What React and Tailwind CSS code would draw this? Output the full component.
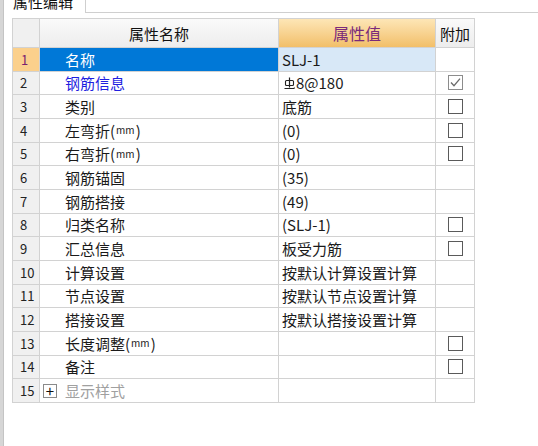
import React from 'react';

const rows = [
  { n: 1, name: '名称', value: 'SLJ-1', box: null, selected: true },
  { n: 2, name: '钢筋信息', value: 'rebar', box: 'checked', blue: true },
  { n: 3, name: '类别', value: '底筋', box: 'empty' },
  { n: 4, name: '左弯折', mm: true, value: '(0)', box: 'empty' },
  { n: 5, name: '右弯折', mm: true, value: '(0)', box: 'empty' },
  { n: 6, name: '钢筋锚固', value: '(35)', box: null },
  { n: 7, name: '钢筋搭接', value: '(49)', box: null },
  { n: 8, name: '归类名称', value: '(SLJ-1)', box: 'empty' },
  { n: 9, name: '汇总信息', value: '板受力筋', box: 'empty' },
  { n: 10, name: '计算设置', value: '按默认计算设置计算', box: null },
  { n: 11, name: '节点设置', value: '按默认节点设置计算', box: null },
  { n: 12, name: '搭接设置', value: '按默认搭接设置计算', box: null },
  { n: 13, name: '长度调整', mm: true, value: '', box: 'empty' },
  { n: 14, name: '备注', value: '', box: 'empty' },
  { n: 15, name: '显示样式', value: '', box: null, group: true },
];

function RebarMark() {
  // grade III rebar symbol
  return (
    <svg width="11" height="14" viewBox="0 0 11 14" className="mr-[1px]">
      <path d="M5.5 1.5v10" stroke="#222" strokeWidth="1.2" fill="none" />
      <rect x="1.5" y="4.5" width="8" height="5" rx="1" stroke="#222" strokeWidth="1.1" fill="none" />
      <path d="M0.5 12.5h9.5l0.5 -1" stroke="#222" strokeWidth="1.1" fill="none" />
    </svg>
  );
}

function CheckBox({ checked }) {
  return (
    <div
      className={
        checked
          ? 'w-[15px] h-[15px] border border-[#8c8c8c] bg-white flex items-center justify-center'
          : 'w-[15px] h-[15px] border border-[#5a5a5a] bg-white'
      }
    >
      {checked && (
        <svg width="13" height="13" viewBox="0 0 13 13">
          <path d="M2 6.5l3 3.2 6-7" stroke="#6a6a6a" strokeWidth="1.3" fill="none" />
        </svg>
      )}
    </div>
  );
}

function Row({ r }) {
  return (
    <div className="flex h-[23.67px] border-b border-[#d2d2d2]">
      <div
        className={
          r.selected
            ? 'w-[27px] border-r border-[#d2d2d2] bg-[#fbd08c] text-[#7a2070] flex items-center pl-[8px] text-[13px]'
            : 'w-[27px] border-r border-[#d2d2d2] bg-[#f0f0f0] text-[#222] flex items-center pl-[7px] text-[13px]'
        }
      >
        {r.n}
      </div>
      <div
        className={
          r.selected
            ? 'w-[239px] border-r border-[#d2d2d2] bg-[#0078d7] text-white flex items-center pl-[25px]'
            : 'w-[239px] border-r border-[#d2d2d2] flex items-center pl-[25px] ' +
              (r.blue ? 'text-[#1f1fe0]' : r.group ? 'text-[#a0a0a0]' : 'text-[#1a1a1a]')
        }
      >
        {r.group && (
          <div className="w-[14px] h-[14px] border border-[#8a8a8a] ml-[-22px] mr-[8px] flex items-center justify-center text-[#111] text-[15px] leading-none">
            +
          </div>
        )}
        {r.name}
        {r.mm && (
          <span className="flex items-center">
            (<span className="text-[10px] px-[1px]">mm</span>)
          </span>
        )}
      </div>
      <div
        className={
          r.selected
            ? 'w-[157px] border-r border-[#d2d2d2] bg-[#d8e8f7] text-[#1a1a1a] flex items-center pl-[3px]'
            : 'w-[157px] border-r border-[#d2d2d2] text-[#1a1a1a] flex items-center pl-[3px]'
        }
      >
        {r.value === 'rebar' ? (
          <span className="flex items-center pl-[2px]">
            <RebarMark />
            8@180
          </span>
        ) : (
          r.value
        )}
      </div>
      <div className="w-[39px] border-r border-[#d2d2d2] flex items-center justify-center">
        {r.box && <CheckBox checked={r.box === 'checked'} />}
      </div>
    </div>
  );
}

export default function App() {
  return (
    <div className="w-[538px] h-[446px] bg-white flex overflow-hidden font-['Noto_Sans_CJK_SC','Noto_Sans',sans-serif] text-[15px] leading-none">
      <div className="w-[4px] h-full bg-[#d6d6d6] border-r border-[#c4c4c4]" />
      <div className="flex-1 flex flex-col">
        {/* tab strip */}
        <div className="flex h-[13px]">
          <div className="w-[82px] border-r border-[#cfcfcf] overflow-hidden pl-[9px]">
            <div className="mt-[-6px] text-[15px] text-[#111]">属性编辑</div>
          </div>
          <div className="flex-1 border-b border-[#cfcfcf]" />
        </div>

        {/* property grid */}
        <div className="ml-[8px] mt-[5px] w-[463px] border-l border-t border-[#d2d2d2]">
          <div className="flex h-[29px] border-b border-[#d2d2d2]">
            <div className="w-[27px] border-r border-[#d2d2d2] bg-[#f0f0f0]" />
            <div className="w-[239px] border-r border-[#d2d2d2] bg-gradient-to-b from-[#fafafa] to-[#ededed] flex items-center justify-center text-[#111]">
              属性名称
            </div>
            <div className="w-[157px] border-r border-[#d2d2d2] bg-gradient-to-b from-[#fde6b6] to-[#f2bf68] flex items-center justify-center text-[#7a2a7a] text-[16px]">
              属性值
            </div>
            <div className="w-[39px] border-r border-[#d2d2d2] bg-gradient-to-b from-[#fafafa] to-[#ededed] flex items-center justify-center text-[#111]">
              附加
            </div>
          </div>
          {rows.map((r) => (
            <Row key={r.n} r={r} />
          ))}
        </div>
      </div>
    </div>
  );
}
